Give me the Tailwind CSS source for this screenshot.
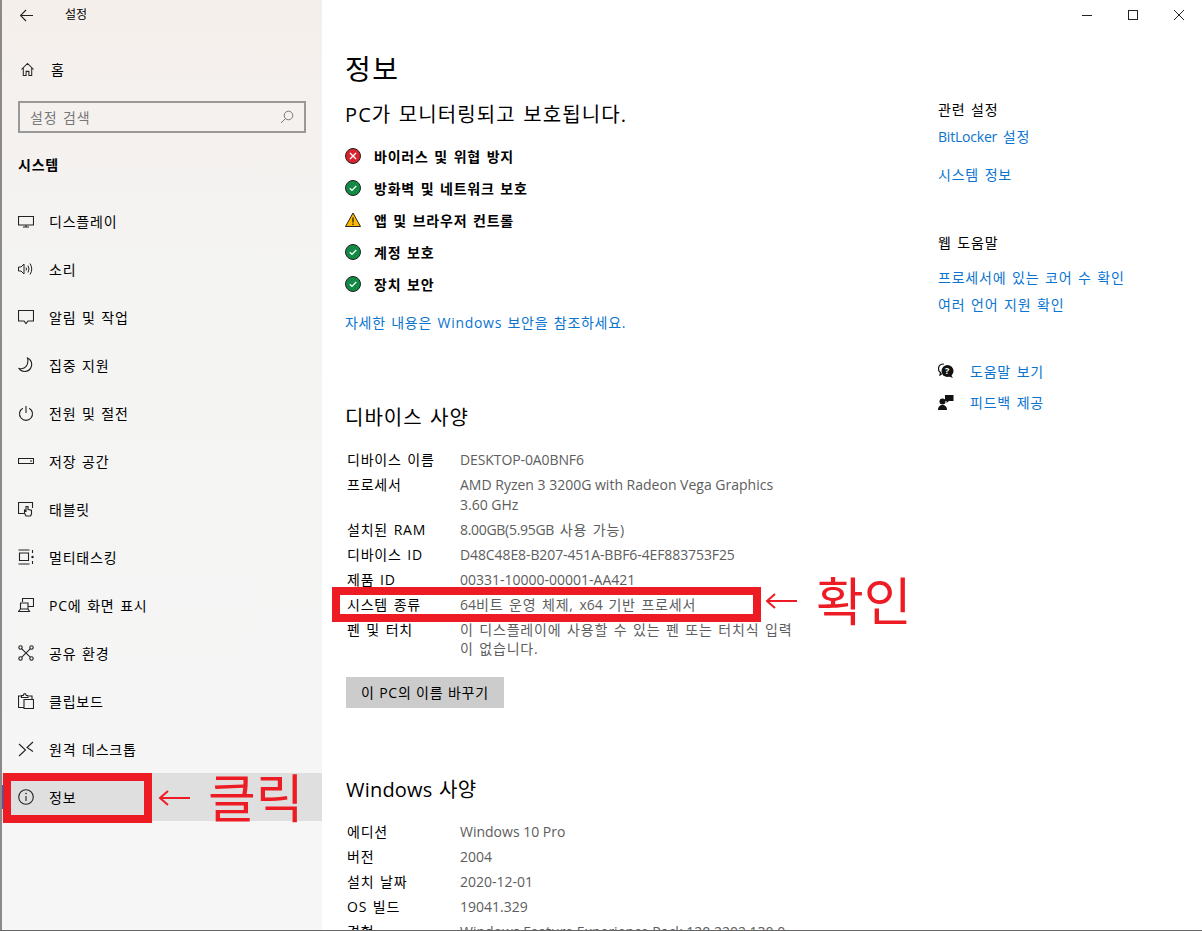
<!DOCTYPE html>
<html lang="ko">
<head>
    <meta charset="UTF-8">
    <script src="https://cdn.jsdelivr.net/npm/@tailwindcss/browser@4"></script>
    <title>설정</title>
</head>
<body class="bg-white font-['Open_Sans','Noto_Sans_CJK_KR',sans-serif] text-[14px] tracking-[0.8px] [word-spacing:1.2px] text-black">
<div class="relative flex h-[931px] w-[1202px] overflow-hidden border-b border-[#666]">

    <!-- sidebar -->
    <aside class="flex h-full w-[322px] shrink-0 flex-col border-l-2 border-[#8a8a8a] bg-gradient-to-b from-[#f5efeb] via-[#f4f4f3] via-30% to-[#f6f6f6]">
        <div class="flex h-[30px] items-center pl-[18px] text-[12px] tracking-normal">
            <svg class="w-[13px] h-[13px]" viewBox="0 0 13 13" fill="none" stroke="#222" stroke-width="1.1"><path d="M.5 6.500h12.500M6 1L.5 6.500 6 12"/></svg>
            <span class="ml-[32px]">설정</span>
        </div>
        <div class="mt-[15px] flex h-[48px] items-center pl-[18px]">
            <svg class="w-[15px] h-[15px]" viewBox="0 0 16 16" fill="none" stroke="#222" stroke-width="1.1"><path d="M1.500 8L8 1.500 14.500 8M3.500 6.500V14.500H6.500V10H9.500V14.500H12.500V6.500"/></svg>
            <span class="ml-[16px]">홈</span>
        </div>
        <div class="ml-[16px] mt-[8px] flex h-[32px] w-[288px] items-center justify-between border-2 border-[#999] px-[10px] text-[#777]">
            <span>설정 검색</span>
            <svg class="w-[14px] h-[14px]" viewBox="0 0 14 14" fill="none" stroke="#777" stroke-width="1"><circle cx="8.500" cy="5.500" r="4.300"/><path d="M5.500 8.500L1 13"/></svg>
        </div>
        <div class="ml-[16px] mt-[20px] h-[24px] text-[14px] leading-[24px] font-bold">시스템</div>
        <nav class="mt-[20px] flex flex-col">
            <div class="flex h-[48px] items-center pl-[16px]">
                <svg class="w-[16px] h-[16px]" viewBox="0 0 16 16" fill="none" stroke="#222" stroke-width="1.1"><path d="M.5 3.500h15v8.500H.5zM8 12v2M5 14h6"/></svg>
                <span class="ml-[15px]">디스플레이</span>
            </div>
            <div class="flex h-[48px] items-center pl-[16px]">
                <svg class="w-[16px] h-[16px]" viewBox="0 0 16 16" fill="none" stroke="#222" stroke-width="1"><path d="M.5 6H3L6 3v10L3 10H.5zM8 6.500q1 1.500 0 3M10 4.500q2 3.500 0 7M12 2.500q3.500 5.500 0 11"/></svg>
                <span class="ml-[15px]">소리</span>
            </div>
            <div class="flex h-[48px] items-center pl-[16px]">
                <svg class="w-[16px] h-[16px]" viewBox="0 0 16 16" fill="none" stroke="#222" stroke-width="1.1"><path d="M.5 1.500h15v10.500H10L8 14.500 6 12H.5z"/></svg>
                <span class="ml-[15px]">알림 및 작업</span>
            </div>
            <div class="flex h-[48px] items-center pl-[16px]">
                <svg class="w-[16px] h-[16px]" viewBox="0 0 16 16" fill="none" stroke="#222" stroke-width="1.1"><path d="M9.500 1q5 2.500 4 8-1.500 5.500-7 5.500-3.500 0-5.500-3 5.500 1 8-3.500 1.500-3.500.5-7z"/></svg>
                <span class="ml-[15px]">집중 지원</span>
            </div>
            <div class="flex h-[48px] items-center pl-[16px]">
                <svg class="w-[16px] h-[16px]" viewBox="0 0 16 16" fill="none" stroke="#222" stroke-width="1.1"><path d="M8 1v7M4.800 3.200a6.500 6.500 0 1 0 6.400 0"/></svg>
                <span class="ml-[15px]">전원 및 절전</span>
            </div>
            <div class="flex h-[48px] items-center pl-[16px]">
                <svg class="w-[16px] h-[16px]" viewBox="0 0 16 16" fill="none" stroke="#222" stroke-width="1.1"><path d="M.5 5.500h15v5H.5zM12 8h2"/></svg>
                <span class="ml-[15px]">저장 공간</span>
            </div>
            <div class="flex h-[48px] items-center pl-[16px]">
                <svg class="w-[16px] h-[16px]" viewBox="0 0 16 16" fill="none" stroke="#222" stroke-width="1.1"><path d="M6 12.500H.5V1.500h14V7M8 15l-1.500-3V9l1.500 1V5.500h2V8.500l3.500.8V13l-1 2z"/></svg>
                <span class="ml-[15px]">태블릿</span>
            </div>
            <div class="flex h-[48px] items-center pl-[16px]">
                <svg class="w-[16px] h-[16px]" viewBox="0 0 16 16" fill="none" stroke="#222" stroke-width="1.1"><path d="M.5 1h11M.5 15h11M1.500 4h9v7.500h-9zM14.500 1v3M14.500 12v3"/><circle cx="14.500" cy="8" r="1.200" fill="#222" stroke="none"/></svg>
                <span class="ml-[15px]">멀티태스킹</span>
            </div>
            <div class="flex h-[48px] items-center pl-[16px]">
                <svg class="w-[16px] h-[16px]" viewBox="0 0 16 16" fill="none" stroke="#222" stroke-width="1.1"><path d="M4.500 5V1.500h11v8h-5M2.500 6h7.500v6H2.500zM.5 14.500h11L10 12H2.500z"/></svg>
                <span class="ml-[15px]">PC에 화면 표시</span>
            </div>
            <div class="flex h-[48px] items-center pl-[16px]">
                <svg class="w-[16px] h-[16px]" viewBox="0 0 16 16" fill="none" stroke="#222" stroke-width="1.1"><circle cx="2.500" cy="2.500" r="1.700"/><circle cx="13.500" cy="2.500" r="1.700"/><circle cx="2.500" cy="13.500" r="1.700"/><circle cx="13.500" cy="13.500" r="1.700"/><path d="M3.800 3.800l8.400 8.400M12.200 3.800l-8.400 8.400"/></svg>
                <span class="ml-[15px]">공유 환경</span>
            </div>
            <div class="flex h-[48px] items-center pl-[16px]">
                <svg class="w-[16px] h-[16px]" viewBox="0 0 16 16" fill="none" stroke="#222" stroke-width="1.1"><path d="M3.500 3H.5v11.500h5M11 3h3v3M3.500 4.500V2.500h1.800L6 .8h1.500l.7 1.700H10v2zM6 6.500h9.500v9H6z"/></svg>
                <span class="ml-[15px]">클립보드</span>
            </div>
            <div class="flex h-[48px] items-center pl-[16px]">
                <svg class="w-[16px] h-[16px]" viewBox="0 0 16 16" fill="none" stroke="#222" stroke-width="1.1"><path d="M1 3l6.500 6L1 15M15 1L9 6.500l6 4"/></svg>
                <span class="ml-[15px]">원격 데스크톱</span>
            </div>
            <div class="relative flex h-[48px] items-center bg-[#dfdfdf] pl-[16px]">
                <div class="absolute left-0 top-[12px] h-[24px] w-[4px] bg-[#0078d7]"></div>
                <svg class="w-[16px] h-[16px]" viewBox="0 0 16 16" fill="none" stroke="#222" stroke-width="1.1"><circle cx="8" cy="8" r="7.300"/><path d="M8 7v5"/><circle cx="8" cy="4.500" r=".8" fill="#222" stroke="none"/></svg>
                <span class="ml-[15px]">정보</span>
            </div>
        </nav>
    </aside>

    <!-- main column -->
    <main class="w-[578px] shrink-0 pl-[23px]">
        <h1 class="mt-[49px] text-[28px] leading-[40px] tracking-[1.5px]">정보</h1>
        <h2 class="mt-[12px] text-[20px] leading-[28px] tracking-[1.1px]">PC가 모니터링되고 보호됩니다.</h2>
        <ul class="mt-[11px] flex flex-col font-semibold">
            <li class="flex h-[32px] items-center">
                <svg class="w-[16px] h-[16px]" viewBox="0 0 16 16"><circle cx="8" cy="8" r="7.500" fill="#d8222f" stroke="#222"/><path d="M5 5l6 6M11 5l-6 6" stroke="#fff" stroke-width="1.300"/></svg>
                <span class="ml-[13px]">바이러스 및 위협 방지</span>
            </li>
            <li class="flex h-[32px] items-center">
                <svg class="w-[16px] h-[16px]" viewBox="0 0 16 16"><circle cx="8" cy="8" r="7.500" fill="#108a45" stroke="#222"/><path d="M4.800 8.200l2.200 2.200 4.200-4.400" fill="none" stroke="#fff" stroke-width="1.300"/></svg>
                <span class="ml-[13px]">방화벽 및 네트워크 보호</span>
            </li>
            <li class="flex h-[32px] items-center">
                <svg class="w-[16px] h-[16px]" viewBox="0 0 16 16"><path d="M8 1L15.500 14.500H.5z" fill="#fcb900" stroke="#222"/><path d="M8 5.500v5M8 11.500v1.500" stroke="#222" stroke-width="1.300"/></svg>
                <span class="ml-[13px]">앱 및 브라우저 컨트롤</span>
            </li>
            <li class="flex h-[32px] items-center">
                <svg class="w-[16px] h-[16px]" viewBox="0 0 16 16"><circle cx="8" cy="8" r="7.500" fill="#108a45" stroke="#222"/><path d="M4.800 8.200l2.200 2.200 4.200-4.400" fill="none" stroke="#fff" stroke-width="1.300"/></svg>
                <span class="ml-[13px]">계정 보호</span>
            </li>
            <li class="flex h-[32px] items-center">
                <svg class="w-[16px] h-[16px]" viewBox="0 0 16 16"><circle cx="8" cy="8" r="7.500" fill="#108a45" stroke="#222"/><path d="M4.800 8.200l2.200 2.200 4.200-4.400" fill="none" stroke="#fff" stroke-width="1.300"/></svg>
                <span class="ml-[13px]">장치 보안</span>
            </li>
        </ul>
        <p class="mt-[13px] leading-[20px] tracking-[0.7px] text-[#0a74cf]">자세한 내용은 Windows 보안을 참조하세요.</p>

        <h2 class="mt-[71px] text-[20px] leading-[28px] tracking-[1px]">디바이스 사양</h2>
        <dl class="mt-[18px] grid w-[460px] grid-cols-[115px_337px] leading-[20px] [&>dd]:mb-[5px] [&>dd]:text-[#5d5d5d]">
            <dt class="pl-[2px]">디바이스 이름</dt><dd class="tracking-[-0.1px] [word-spacing:0]">DESKTOP-0A0BNF6</dd>
            <dt class="pl-[2px]">프로세서</dt><dd class="tracking-normal [word-spacing:0]">AMD Ryzen 3 3200G with Radeon Vega Graphics 3.60 GHz</dd>
            <dt class="pl-[2px]">설치된 RAM</dt><dd><span class="tracking-[-0.3px]">8.00GB(5.95GB</span> 사용 가능)</dd>
            <dt class="pl-[2px]">디바이스 ID</dt><dd class="tracking-[-0.1px] [word-spacing:0]">D48C48E8-B207-451A-BBF6-4EF883753F25</dd>
            <dt class="pl-[2px]">제품 ID</dt><dd class="tracking-normal [word-spacing:0]">00331-10000-00001-AA421</dd>
            <dt class="pl-[2px]">시스템 종류</dt><dd><span class="tracking-normal">64</span>비트 운영 체제, <span class="tracking-normal">x64</span> 기반 프로세서</dd>
            <dt class="pl-[2px]">펜 및 터치</dt><dd class="leading-[19px]">이 디스플레이에 사용할 수 있는 펜 또는 터치식 입력이 없습니다.</dd>
        </dl>
        <button class="ml-[1px] mt-[14px] h-[31px] w-[158px] bg-[#cccccc]">이 PC의 이름 바꾸기</button>

        <h2 class="ml-[1px] mt-[68px] text-[20px] leading-[28px] tracking-[0.2px]">Windows 사양</h2>
        <dl class="mt-[18px] grid grid-cols-[115px_440px] leading-[20px] [&>dd]:mb-[5px] [&>dd]:text-[#5d5d5d]">
            <dt class="pl-[2px]">에디션</dt><dd class="tracking-normal [word-spacing:0]">Windows 10 Pro</dd>
            <dt class="pl-[2px]">버전</dt><dd class="tracking-normal">2004</dd>
            <dt class="pl-[2px]">설치 날짜</dt><dd class="tracking-normal">2020-12-01</dd>
            <dt class="pl-[2px]">OS 빌드</dt><dd class="tracking-normal">19041.329</dd>
            <dt class="pl-[2px]">경험</dt><dd class="tracking-normal [word-spacing:0]">Windows Feature Experience Pack 120.2202.130.0</dd>
        </dl>
    </main>

    <!-- related links -->
    <section class="flex-1 pl-[38px] pt-[100px]">
        <div class="leading-[20px]">관련 설정</div>
        <div class="mt-[7px] leading-[20px] text-[#0a74cf]"><span class="tracking-[-0.2px]">BitLocker</span> 설정</div>
        <div class="mt-[18px] leading-[20px] text-[#0a74cf]">시스템 정보</div>
        <div class="mt-[48px] leading-[20px]">웹 도움말</div>
        <div class="mt-[15px] leading-[20px] text-[#0a74cf]">프로세서에 있는 코어 수 확인</div>
        <div class="mt-[7px] leading-[20px] text-[#0a74cf]">여러 언어 지원 확인</div>
        <div class="mt-[40px] flex h-[32px] items-center">
            <svg class="w-[16px] h-[16px]" viewBox="0 0 16 16"><path d="M6 1C2.500 1 .5 3.200.5 5.800c0 1.600.8 3 2 3.800L2 12l2.500-1.500" fill="none" stroke="#111" stroke-width="1.200"/><circle cx="9.500" cy="8" r="6" fill="#111"/><path d="M13 12l2 3-4-1.500z" fill="#111"/><text x="9.500" y="11" font-size="9" font-weight="700" fill="#fff" text-anchor="middle">?</text></svg>
            <span class="ml-[16px] text-[#0a74cf]">도움말 보기</span>
        </div>
        <div class="flex h-[30px] items-center">
            <svg class="w-[16px] h-[16px]" viewBox="0 0 16 16" fill="#111"><circle cx="4.500" cy="7.500" r="3"/><path d="M0 16c0-3.500 2-5 4.500-5S9 12.500 9 16z"/><path d="M7 1h8.500v6H11l-2.500 2V7H7z"/></svg>
            <span class="ml-[16px] text-[#0a74cf]">피드백 제공</span>
        </div>
    </section>

    <!-- window buttons -->
    <div class="absolute right-0 top-0 flex h-[30px] items-center text-[#222]">
        <div class="flex h-[30px] w-[46px] items-center justify-center">
            <div class="h-px w-[10px] bg-[#222]"></div>
        </div>
        <div class="flex h-[30px] w-[46px] items-center justify-center">
            <div class="h-[10px] w-[10px] border border-[#222]"></div>
        </div>
        <div class="flex h-[30px] w-[46px] items-center justify-center">
            <svg class="w-[10px] h-[10px]" viewBox="0 0 10 10" stroke="#222" stroke-width="1"><path d="M0 0l10 10M10 0L0 10"/></svg>
        </div>
    </div>

    <!-- red annotations drawn over the screenshot -->
    <div class="absolute left-[3px] top-[773px] h-[50px] w-[149px] border-[8px] border-[#ed1c24]"></div>
    <div class="absolute left-[158px] top-[768px] flex items-center tracking-normal text-[#ed1c24]">
        <svg class="w-[32px] h-[20px]" viewBox="0 0 32 20" fill="none" stroke="#ed1c24" stroke-width="2"><path d="M32 10H2M10 3L2 10l8 7"/></svg>
        <span class="ml-[18px] text-[52px] leading-[60px]">클릭</span>
    </div>
    <div class="absolute left-[332px] top-[587px] h-[35px] w-[429px] border-[8px] border-[#ed1c24]"></div>
    <div class="absolute left-[765px] top-[571px] flex items-center tracking-normal text-[#ed1c24]">
        <svg class="w-[32px] h-[20px]" viewBox="0 0 32 20" fill="none" stroke="#ed1c24" stroke-width="2"><path d="M32 10H2M10 3L2 10l8 7"/></svg>
        <span class="ml-[19px] text-[52px] leading-[60px]">확인</span>
    </div>
</div>
</body>
</html>
